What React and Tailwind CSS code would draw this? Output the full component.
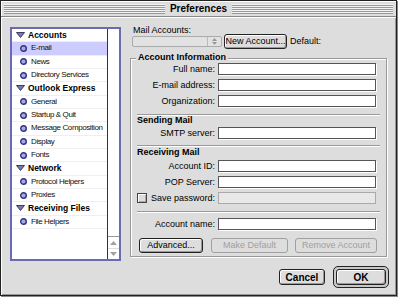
import React from 'react';

const sidebar = [
  { head: true, label: 'Accounts' },
  { label: 'E-mail', selected: true },
  { label: 'News' },
  { label: 'Directory Services' },
  { head: true, label: 'Outlook Express' },
  { label: 'General' },
  { label: 'Startup & Quit' },
  { label: 'Message Composition' },
  { label: 'Display' },
  { label: 'Fonts' },
  { head: true, label: 'Network' },
  { label: 'Protocol Helpers' },
  { label: 'Proxies' },
  { head: true, label: 'Receiving Files' },
  { label: 'File Helpers' },
];

const Triangle = () => (
  <svg width="9" height="6" viewBox="0 0 9 6" className="shrink-0">
    <polygon points="0.5,0.5 8.5,0.5 4.5,5.5" fill="#7a7aa8" stroke="#3c3c66" strokeWidth="1" />
  </svg>
);

const Bullet = () => (
  <svg width="7" height="7" viewBox="0 0 7 7" className="shrink-0">
    <circle cx="3.5" cy="3.5" r="2.8" fill="#a8a8e8" stroke="#32327a" strokeWidth="1.4" />
  </svg>
);

const Arrow = ({ up }) => (
  <svg width="7" height="4" viewBox="0 0 7 4">
    <polygon points={up ? '0,4 7,4 3.5,0' : '0,0 7,0 3.5,4'} fill="#a0a0a0" />
  </svg>
);

const Sidebar = () => (
  <div className="w-[111px] h-[234px] mt-[2px] border-2 border-[#6b6bb3] bg-white flex shrink-0">
    <div className="flex-1 flex flex-col overflow-hidden">
      {sidebar.map((row) => (
        <div
          key={row.label}
          className={`h-[13.33px] flex items-center border-b border-[#efefef] ${
            row.selected ? 'bg-[#ccccff]' : ''
          } ${row.head ? 'pl-[4px] gap-[3px]' : 'pl-[8px] gap-[4px]'}`}
        >
          {row.head ? <Triangle /> : <Bullet />}
          <span
            className={
              row.head
                ? 'text-[8.5px] font-bold whitespace-nowrap'
                : 'text-[8px] tracking-[-0.4px] whitespace-nowrap text-[#111]'
            }
          >
            {row.label}
          </span>
        </div>
      ))}
    </div>
    <div className="w-[12px] border-l border-[#333] flex flex-col justify-end">
      <div className="border-t border-[#999] h-[12px] flex items-center justify-center">
        <Arrow up />
      </div>
      <div className="border-t border-[#ddd] h-[11px] flex items-center justify-center">
        <Arrow />
      </div>
    </div>
  </div>
);

const Input = ({ disabled }) => (
  <div
    className={`w-[158px] h-[12px] border ${
      disabled ? 'border-[#aaa] bg-[#e8e8e8]' : 'border-[#555] bg-white shadow-[1px_1px_0_#fff]'
    }`}
  />
);

const Field = ({ label, disabled, check }) => (
  <div className="flex items-center h-[12px]">
    <div className="w-[87px] pr-[3px] flex items-center text-[9px] leading-[12px]">
      {check && (
        <span className="ml-[6px] w-[10px] h-[10px] border border-[#444] bg-[#dddddd] shadow-[inset_1px_1px_0_#fff,inset_-1px_-1px_0_#aaa]" />
      )}
      <span className="ml-auto whitespace-nowrap">{label}</span>
    </div>
    <Input disabled={disabled} />
  </div>
);

const Sep = ({ className }) => (
  <div className={`mx-[6px] border-t border-[#999] border-b border-b-white ${className}`} />
);

const Button = ({ children, disabled, className = '' }) => (
  <div
    className={`h-[15px] rounded-[3px] border flex items-center justify-center text-[9px] ${
      disabled
        ? 'border-[#a0a0a0] text-[#a0a0a0]'
        : 'border-[#222] text-black shadow-[inset_1px_1px_0_#fff,inset_-1px_-1px_0_#999]'
    } bg-[#dddddd] ${className}`}
  >
    {children}
  </div>
);

export default function App() {
  return (
    <div className="w-[400px] h-[298px] bg-white font-['Liberation_Sans',Arial,sans-serif] text-black">
      <div className="w-[397px] h-[296px] border border-[#222] bg-[#dddddd] shadow-[1px_1px_0_#888] flex flex-col">
        <div className="h-[16px] border-b border-[#888] px-[3px] flex items-center bg-[#dddddd] shadow-[inset_1px_1px_0_#fff]">
          <div className="flex-1 h-[10px] bg-[repeating-linear-gradient(to_bottom,#f2f2f2_0px,#f2f2f2_1px,#9a9a9a_1px,#9a9a9a_2px)]" />
          <span className="px-[5px] text-[10px] font-bold leading-[14px]">Preferences</span>
          <div className="flex-1 h-[10px] bg-[repeating-linear-gradient(to_bottom,#f2f2f2_0px,#f2f2f2_1px,#9a9a9a_1px,#9a9a9a_2px)]" />
        </div>

        <div className="flex-1 flex flex-col shadow-[inset_1px_1px_0_#fff,inset_-1px_-1px_0_#999]">
          <div className="flex pl-[9px] pt-[8px]">
            <Sidebar />
            <div className="ml-[9px] w-[257px] flex flex-col">
              <div className="text-[9px] leading-[11px] pl-[3px]">Mail Accounts:</div>
              <div className="flex items-center h-[13px] mt-[-1px]">
                <div className="ml-[2px] w-[90px] h-[11px] border border-[#aaa] rounded-[2px] bg-[#e2e2e2] flex justify-end">
                  <div className="w-[14px] border-l border-[#bbb] flex flex-col items-center justify-center gap-[1px]">
                    <svg width="5" height="3" viewBox="0 0 5 3"><polygon points="0,3 5,3 2.5,0" fill="#999" /></svg>
                    <svg width="5" height="3" viewBox="0 0 5 3"><polygon points="0,0 5,0 2.5,3" fill="#999" /></svg>
                  </div>
                </div>
                <Button className="ml-[2px] w-[63px] h-[13px] text-[8.5px]">New Account...</Button>
                <span className="ml-[3px] text-[9px]">Default:</span>
              </div>

              <div className="relative mt-[10px] h-[199px] border border-[#999] shadow-[inset_1px_1px_0_#fff,1px_1px_0_#fff] flex flex-col pt-[4px]">
                <span className="absolute left-[5px] top-[-7px] px-[2px] bg-[#dddddd] text-[9px] font-bold leading-[11px]">
                  Account Information
                </span>
                <div className="flex flex-col gap-[4px]">
                  <Field label="Full name:" />
                  <Field label="E-mail address:" />
                  <Field label="Organization:" />
                </div>
                <Sep className="mt-[7px]" />
                <div className="pl-[6px] h-[9px] text-[9px] font-bold leading-[9px]">Sending Mail</div>
                <div className="mt-[2px]">
                  <Field label="SMTP server:" />
                </div>
                <Sep className="mt-[6px]" />
                <div className="pl-[6px] h-[11px] text-[9px] font-bold leading-[11px]">Receiving Mail</div>
                <div className="mt-[2px] flex flex-col gap-[4px]">
                  <Field label="Account ID:" />
                  <Field label="POP Server:" />
                  <Field label="Save password:" check disabled />
                </div>
                <Sep className="mt-[7px]" />
                <div className="mt-[5px]">
                  <Field label="Account name:" />
                </div>
                <div className="mt-[8px] pl-[8px] flex">
                  <Button className="w-[64px]">Advanced...</Button>
                  <Button disabled className="ml-[8px] w-[77px]">Make Default</Button>
                  <Button disabled className="ml-[7px] w-[82px]">Remove Account</Button>
                </div>
              </div>
            </div>
          </div>

          <div className="mt-[5px] flex items-center justify-end pr-[7px]">
            <Button className="w-[46px] h-[16px] text-[10px] font-bold">Cancel</Button>
            <div className="ml-[8px] w-[56px] h-[22px] rounded-[5px] border border-[#222] bg-[#c8c8c8] p-[2px]">
              <Button className="w-full h-full text-[10px] font-bold">OK</Button>
            </div>
          </div>
        </div>
      </div>
    </div>
  );
}
